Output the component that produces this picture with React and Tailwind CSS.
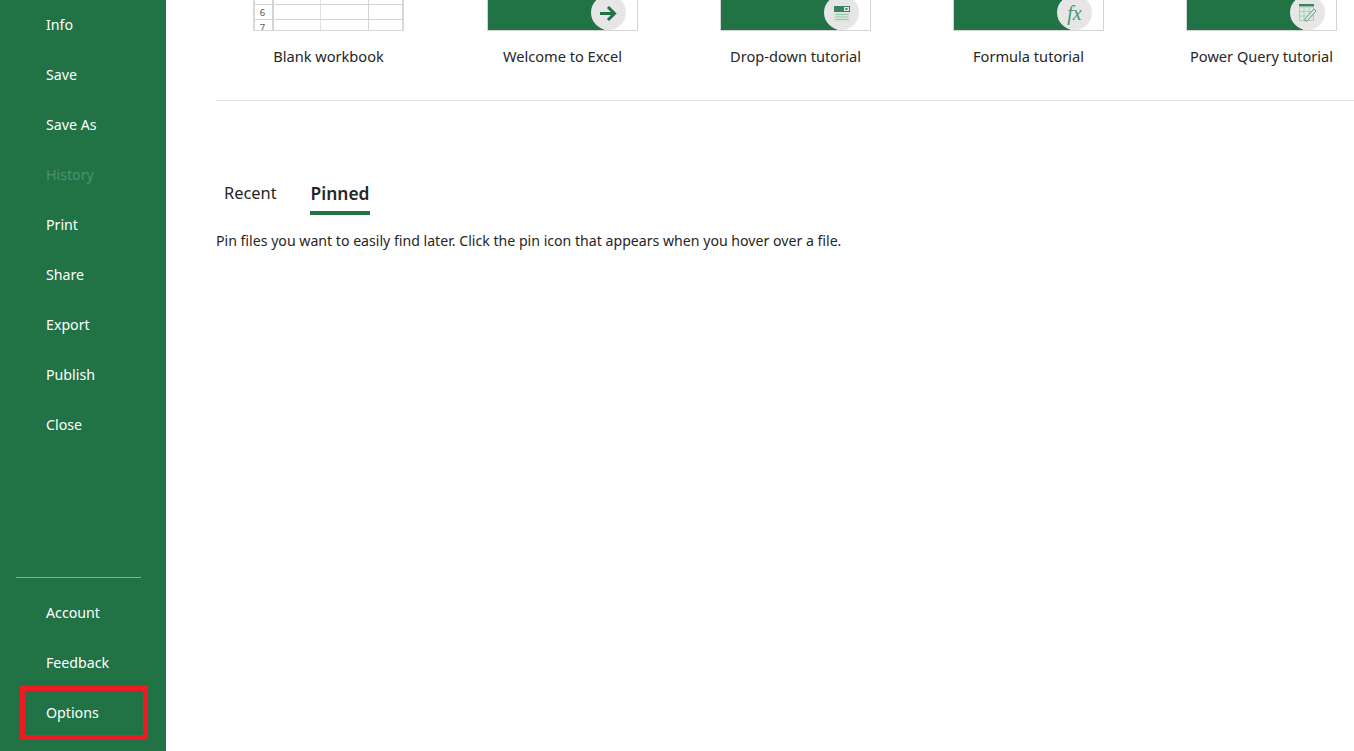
const top = ["Info", "Save", "Save As", "History", "Print", "Share", "Export", "Publish", "Close"];
const bottom = ["Account", "Feedback", "Options"];

function NavItem({ label }) {
  const off = label === "History";
  return (
    <div className={`relative h-[50px] pl-[46px] flex items-center text-[14.2px] ${off ? "text-[#4d9070]" : "text-white"}`}>
      {label}
      {label === "Options" && (
        <div className="absolute left-[20px] top-[-2px] w-[128px] h-[54px] border-[5px] border-[#ed1c24]" />
      )}
    </div>
  );
}

function GridRow({ num, h }) {
  return (
    <div className={`flex shrink-0 border-b border-[#d4d4d4] ${h}`}>
      <div className="w-[19px] shrink-0 border-r-2 border-[#d4d4d4] pr-[2px] text-[9.5px] leading-[15px] text-center text-[#555]">{num}</div>
      <div className="w-[47px] shrink-0 border-r border-[#e0e0e0]" />
      <div className="w-[48px] shrink-0 border-r border-[#d4d4d4]" />
      <div className="flex-1" />
    </div>
  );
}

function Grid() {
  return (
    <div className="w-[151px] h-[31px] overflow-hidden flex flex-col border-x-2 border-b border-[#d8d8d8]">
      <GridRow num="" h="h-[5px]" />
      <GridRow num="6" h="h-[15px]" />
      <GridRow num="7" h="h-[15px]" />
    </div>
  );
}

const G = "#217346";

const Arrow = (
  <svg width="17" height="17" viewBox="0 0 17 17" fill="none" stroke={G} strokeWidth="3" className="mt-px">
    <path d="M0 8.5h14.5M8 2l6.5 6.5L8 15" />
  </svg>
);
const Drop = (
  <svg width="16" height="16" viewBox="0 0 16 16" className="mt-[3px]">
    <rect x="0" y="0" width="16" height="16" fill="#d5e6db" />
    <rect x="0" y="0" width="16" height="6" fill="#3a8460" />
    <rect x="10" y="1" width="5" height="4" fill="#e6e6e6" />
    <rect x="11.5" y="2.2" width="2" height="1.6" fill="#217346" />
    <path d="M1.5 8.5h13M1.5 11h13M1.5 13.5h13" stroke="#9dc4ad" strokeWidth="1" />
  </svg>
);
const Fx = (
  <span className="font-['Liberation_Serif',serif] italic text-[20px] leading-none text-[#4b9470] mt-px">fx</span>
);
const Pq = (
  <svg width="18" height="18" viewBox="0 0 18 18" fill="none" className="mt-px">
    <rect x="0" y="0" width="15" height="2.5" fill="#3a8460" />
    <rect x="0.5" y="3" width="14" height="13.5" fill="#dcebe2" stroke="#a6c9b5" strokeWidth="0.8" />
    <path d="M0.5 7.5h14M0.5 12h14M5 3v13.5M10 3v13.5" stroke="#a6c9b5" strokeWidth="0.8" />
    <path d="M6 15 15 5l2 2-9 10H6z" fill="#e6e6e6" stroke="#5fa380" strokeWidth="1" />
  </svg>
);

function Tutorial({ icon }) {
  return (
    <div className="relative w-[151px] h-[31px] border-x border-b border-[#d4d4d4] bg-white">
      <div className="w-[116px] h-full bg-[#217346]" />
      <div className="absolute left-[103px] top-[-5px] w-[35px] h-[35px] rounded-full bg-[#e6e6e6] flex items-center justify-center">
        {icon}
      </div>
    </div>
  );
}

const cards = [
  ["Blank workbook", null],
  ["Welcome to Excel", Arrow],
  ["Drop-down tutorial", Drop],
  ["Formula tutorial", Fx],
  ["Power Query tutorial", Pq],
];

export default function App() {
  return (
    <div className="flex w-[1354px] h-[751px] overflow-hidden bg-white font-['Noto_Sans',sans-serif] text-[#262626]">
      <aside className="w-[166px] shrink-0 bg-[#217346] flex flex-col justify-between pb-[13px]">
        <nav>
          {top.map((l) => <NavItem key={l} label={l} />)}
        </nav>
        <div>
          <div className="ml-4 w-[125px] h-px bg-[#7fb298] mb-[10px]" />
          {bottom.map((l) => <NavItem key={l} label={l} />)}
        </div>
      </aside>
      <main className="flex-1 pl-[50px]">
        <div className="border-b border-[#e1e1e1] h-[101px]">
          <div className="flex -ml-[4px]">
            {cards.map(([label, icon]) => (
              <div key={label} className="w-[233px] shrink-0 first:mr-px flex flex-col items-center">
                {icon ? <Tutorial icon={icon} /> : <Grid />}
                <div className="mt-[14px] text-[14.6px] leading-[22px] whitespace-nowrap">{label}</div>
              </div>
            ))}
          </div>
        </div>
        <div className="flex mt-[77px] pl-[8px] items-start">
          <div className="text-[16.4px] leading-[30px] h-[37px]">Recent</div>
          <div className="ml-[33px] h-[37px] border-b-[4px] border-[#217346] px-px text-[17.4px] leading-[30px] font-semibold">Pinned</div>
        </div>
        <p className="mt-[16px] text-[14.14px] leading-[20px] whitespace-nowrap">
          Pin files you want to easily find later. Click the pin icon that appears when you hover over a file.
        </p>
      </main>
    </div>
  );
}
